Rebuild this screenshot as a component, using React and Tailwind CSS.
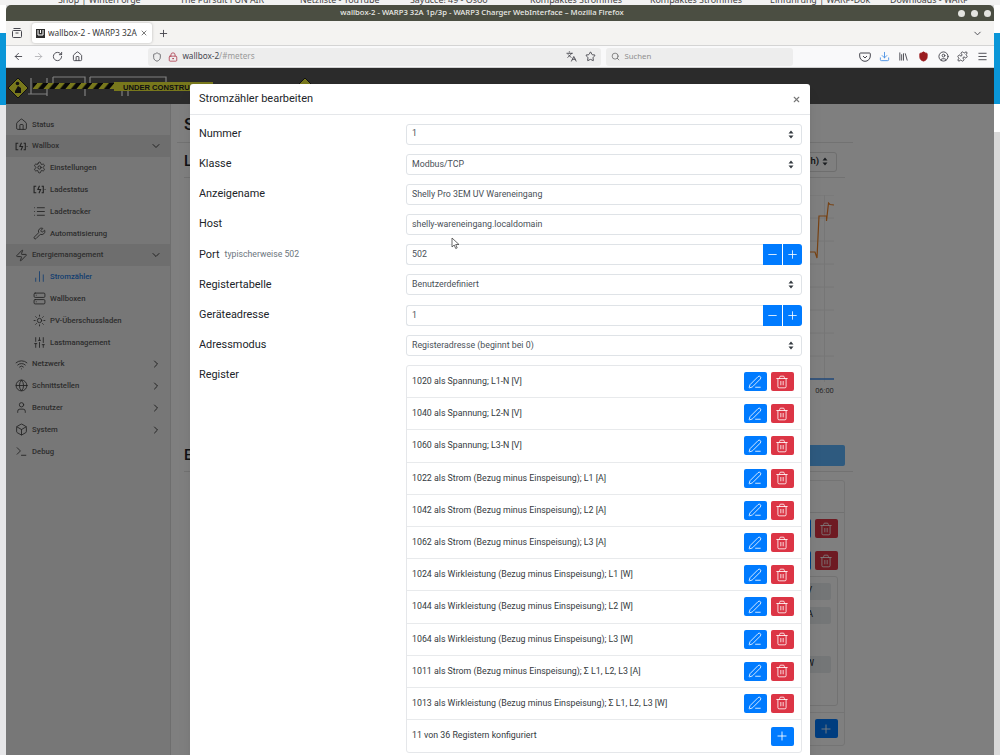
import React from "react";
import {
  ArrowLeft,
  ArrowRight,
  Box,
  ChartNoAxesColumn,
  ChevronDown,
  ChevronRight,
  CircleUser,
  Download,
  Globe,
  House,
  Languages,
  Library,
  List,
  LockKeyhole,
  Menu,
  Minus,
  PenLine,
  Plus,
  Puzzle,
  RotateCw,
  Search,
  Server,
  Settings,
  Shield,
  SlidersVertical,
  Star,
  Sun,
  Terminal,
  Trash2,
  User,
  Wifi,
  Wrench,
  X,
  Zap,
} from "lucide-react";

// [bolt] icon used for the wallbox entries
const ChargerIcon = ({ size = 14 }) => (
  <svg width={size} height={size} viewBox="0 0 24 24" fill="none" stroke="currentColor" strokeWidth="2">
    <path d="M6 6H2v12h4M16 6h3v12h-3" />
    <path d="M12 5l-3 7h5l-3 7" />
    <path d="M21.5 12h1.5" />
  </svg>
);

const PocketIcon = () => (
  <svg width="12" height="12" viewBox="0 0 12 12" fill="none" stroke="currentColor" strokeWidth="1">
    <path d="M1.5 2h9a.8.8 0 0 1 .8.8V5a5.3 5.3 0 0 1-10.6 0V2.8a.8.8 0 0 1 .8-.8z" />
    <path d="M4 5l2 2 2-2" />
  </svg>
);

const SelectArrows = () => (
  <svg width="6" height="9" viewBox="0 0 6 9" fill="#343a40">
    <path d="M3 0.5 5.5 3.5H0.5zM3 8.5 0.5 5.5H5.5z" />
  </svg>
);

const Logo = () => (
  <svg width="320" height="36" viewBox="0 0 320 36" className="shrink-0">
    <g fill="none" stroke="#ffffff" strokeWidth="1.2">
      <path d="M22 26h19M25 10v16M41 10v18M47 9h32v19M47 9v8M84 9h76v8M84 9v8M116 20v8M122 20v8" />
    </g>
    <path d="M12 10 22 20 12 30 2 20z" fill="#f0f038" stroke="#222" strokeWidth="1" />
    <path d="M9 23l3-5 3 2v5h-6z" fill="#222" />
    <circle cx="11.5" cy="15.5" r="1.8" fill="#222" />
    <defs>
      <pattern id="tape" width="11" height="6" patternUnits="userSpaceOnUse" patternTransform="skewX(-40)">
        <rect width="11" height="6" fill="#111" />
        <rect width="5.5" height="6" fill="#f0f038" />
      </pattern>
    </defs>
    <rect x="27" y="15" width="84" height="6" fill="url(#tape)" />
    <rect x="108" y="14" width="99" height="9" fill="#f0f038" />
    <text x="117" y="21.8" fontFamily="Liberation Sans, sans-serif" fontWeight="700" fontSize="7.6" fill="#222">
      UNDER CONSTRUCTION
    </text>
    <path d="M299 10 309 20 299 30 289 20z" fill="#f0f038" stroke="#222" />
    <path d="M297 18h4v6h-4z" fill="#222" />
  </svg>
);

const sideItems = [
  { label: "Status", icon: House },
  { label: "Wallbox", icon: ChargerIcon, chevron: "down", group: true },
  { label: "Einstellungen", icon: Settings, sub: true },
  { label: "Ladestatus", icon: ChargerIcon, sub: true },
  { label: "Ladetracker", icon: List, sub: true },
  { label: "Automatisierung", icon: Wrench, sub: true },
  { label: "Energiemanagement", icon: Zap, chevron: "down", group: true },
  { label: "Stromzähler", icon: ChartNoAxesColumn, sub: true, active: true },
  { label: "Wallboxen", icon: Server, sub: true },
  { label: "PV-Überschussladen", icon: Sun, sub: true },
  { label: "Lastmanagement", icon: SlidersVertical, sub: true },
  { label: "Netzwerk", icon: Wifi, chevron: "right" },
  { label: "Schnittstellen", icon: Globe, chevron: "right" },
  { label: "Benutzer", icon: User, chevron: "right" },
  { label: "System", icon: Box, chevron: "right" },
  { label: "Debug", icon: Terminal },
];

const registers = [
  "1020 als Spannung; L1-N [V]",
  "1040 als Spannung; L2-N [V]",
  "1060 als Spannung; L3-N [V]",
  "1022 als Strom (Bezug minus Einspeisung); L1 [A]",
  "1042 als Strom (Bezug minus Einspeisung); L2 [A]",
  "1062 als Strom (Bezug minus Einspeisung); L3 [A]",
  "1024 als Wirkleistung (Bezug minus Einspeisung); L1 [W]",
  "1044 als Wirkleistung (Bezug minus Einspeisung); L2 [W]",
  "1064 als Wirkleistung (Bezug minus Einspeisung); L3 [W]",
  "1011 als Strom (Bezug minus Einspeisung); Σ L1, L2, L3 [A]",
  "1013 als Wirkleistung (Bezug minus Einspeisung); Σ L1, L2, L3 [W]",
];

const SideRow = ({ item }) => {
  const Icon = item.icon;
  return (
    <div
      className={`flex h-[21.8px] items-center text-[7.7px] font-medium ${item.sub ? "pl-[26px]" : "pl-[8px]"} ${
        item.group ? "bg-[#dcdcdc]" : ""
      } ${item.active ? "text-[#2a7de0]" : "text-[#5c5c5c]"}`}
    >
      <span className={`flex w-[14px] justify-center ${item.active ? "" : "text-[#444]"}`}>
        <Icon size={13} strokeWidth={1.6} />
      </span>
      <span className="ml-[4px]">{item.label}</span>
      {item.chevron === "down" && <ChevronDown size={12} className="ml-auto mr-[8px] text-[#444]" />}
      {item.chevron === "right" && <ChevronRight size={12} className="ml-auto mr-[8px] text-[#444]" />}
    </div>
  );
};

const FormRow = ({ label, hint, children }) => (
  <div className="mb-[9.2px] flex min-h-[21px] items-start">
    <div className="flex h-[21px] w-[207px] shrink-0 items-center text-[10.9px] text-[#212529]">
      {label}
      {hint && <span className="ml-[5px] text-[8.7px] text-[#6c757d]">{hint}</span>}
    </div>
    <div className="min-w-0 flex-1">{children}</div>
  </div>
);

const Field = ({ value, select }) => (
  <div className="flex h-[21px] items-center justify-between rounded-[3px] border border-[#dfe3e7] bg-white pl-[5px] pr-[7px] text-[8.8px] text-[#495057]">
    <span>{value}</span>
    {select && <SelectArrows />}
  </div>
);

const NumberField = ({ value }) => (
  <div className="flex h-[21px]">
    <div className="flex flex-1 items-center rounded-l-[3px] border border-r-0 border-[#dfe3e7] pl-[5px] text-[8.8px] text-[#495057]">
      {value}
    </div>
    <button className="flex w-[19px] items-center justify-center bg-[#007bff] text-white">
      <Minus size={13} strokeWidth={1.5} />
    </button>
    <button className="ml-px flex w-[19px] items-center justify-center rounded-r-[3px] bg-[#007bff] text-white">
      <Plus size={13} strokeWidth={1.5} />
    </button>
  </div>
);

const ActionButton = ({ red, children }) => (
  <button
    className={`flex h-[19px] w-[23px] items-center justify-center rounded-[2px] text-white ${
      red ? "bg-[#dc3545]" : "bg-[#007bff]"
    }`}
  >
    {children}
  </button>
);

const Modal = () => (
  <div className="absolute left-[184px] top-[16px] w-[620px] rounded-t-[3px] bg-white shadow-lg">
    <div className="flex h-[31px] items-center justify-between border-b border-[#e5e7ea] pl-[9px] pr-[9px] pt-[1px]">
      <span className="text-[11px] text-[#212529]">Stromzähler bearbeiten</span>
      <X size={9} strokeWidth={3} className="text-[#777]" />
    </div>
    <div className="pl-[9px] pr-[8px] pt-[9px]">
      <FormRow label="Nummer">
        <Field value="1" select />
      </FormRow>
      <FormRow label="Klasse">
        <Field value="Modbus/TCP" select />
      </FormRow>
      <FormRow label="Anzeigename">
        <Field value="Shelly Pro 3EM UV Wareneingang" />
      </FormRow>
      <FormRow label="Host">
        <Field value="shelly-wareneingang.localdomain" />
      </FormRow>
      <FormRow label="Port" hint="typischerweise 502">
        <NumberField value="502" />
      </FormRow>
      <FormRow label="Registertabelle">
        <Field value="Benutzerdefiniert" select />
      </FormRow>
      <FormRow label="Geräteadresse">
        <NumberField value="1" />
      </FormRow>
      <FormRow label="Adressmodus">
        <Field value="Registeradresse (beginnt bei 0)" select />
      </FormRow>
      <FormRow label="Register">
        <div className="rounded-[3px] border border-[#e5e7ea]">
          {registers.map((reg) => (
            <div key={reg} className="flex h-[32.2px] items-center border-b border-[#e8eaec] pl-[5px] pr-[7.5px] text-[8.8px] text-[#343a40]">
              <span className="flex-1">{reg}</span>
              <ActionButton>
                <PenLine size={14} strokeWidth={1.4} />
              </ActionButton>
              <span className="w-[4px]" />
              <ActionButton red>
                <Trash2 size={14} strokeWidth={1.4} />
              </ActionButton>
            </div>
          ))}
          <div className="flex h-[32px] items-center justify-between pl-[5px] pr-[7.5px] text-[8.8px] text-[#343a40]">
            <span>11 von 36 Registern konfiguriert</span>
            <ActionButton>
              <Plus size={14} strokeWidth={1.5} />
            </ActionButton>
          </div>
        </div>
      </FormRow>
    </div>
    {/* mouse pointer */}
    <svg width="9" height="13" viewBox="0 0 9 13" className="absolute left-[261px] top-[153px]">
      <path d="M1 1v9l2.2-2 1.5 3.5 1.5-.6L4.7 7.5H8z" fill="#fff" stroke="#444" strokeWidth="0.8" />
    </svg>
  </div>
);

const Chart = () => (
  <svg width="661" height="200" viewBox="184 195 661 200" className="mt-[17px]">
    {[195, 218, 241, 264, 287, 310, 333, 356].map((y) => (
      <line key={y} x1="200" x2="834" y1={y} y2={y} stroke="#ececec" />
    ))}
    <line x1="824.5" x2="824.5" y1="195" y2="382" stroke="#ececec" />
    <line x1="200" x2="834" y1="379" y2="379" stroke="#3f8ff0" strokeWidth="1.5" />
    <path
      d="M200 252H815L817 258 819 216H826.5V221L828.5 203 830 204.5 834 205"
      fill="none"
      stroke="#ee8427"
      strokeWidth="1.2"
    />
    <text x="824.5" y="393" textAnchor="middle" fontSize="7.5" fontFamily="Roboto, sans-serif" fill="#555">
      06:00
    </text>
  </svg>
);

const MainContent = () => (
  <div className="w-[661px] pt-[9px] text-[#212529]">
    <div className="h-[22px] text-[17px] font-medium leading-[22px]">Stromzähler</div>
    <div className="-ml-[7px] mt-[7px] h-px w-[676px] bg-[#e5e5e5]" />
    <div className="mt-[9px] flex h-[20px] items-center justify-between pr-[8px]">
      <span className="text-[15px] font-medium">Leistungsverlauf</span>
      <div className="flex h-[20px] w-[120px] items-center justify-end gap-[3px] rounded-[3px] border border-[#dcdcdc] pr-[8px] text-[9.5px] font-medium">
        <span>letzte 48 h)</span>
        <SelectArrows />
      </div>
    </div>
    <div className="mt-[5px] h-px w-[661px] bg-[#e5e5e5]" />
    <Chart />
    <div className="mt-[50px] flex h-[21px] items-center justify-between">
      <span className="text-[15px] font-medium">Einstellungen</span>
      <div className="h-[21px] w-[300px] rounded-[2px] bg-[#5cb4ff]" />
    </div>
    <div className="mt-[5px] h-px w-[669px] bg-[#e5e5e5]" />
    <div className="ml-[20px] mt-[8px] h-[266px] rounded-[3px] border border-[#e8e8e8]">
      <div className="h-[32px] border-b border-[#e2e2e2]" />
      <div className="flex h-[32px] items-center justify-end gap-[4px] pr-[6.5px]">
        <ActionButton>
          <PenLine size={14} strokeWidth={1.4} />
        </ActionButton>
        <ActionButton red>
          <Trash2 size={14} strokeWidth={1.4} />
        </ActionButton>
      </div>
      <div className="flex h-[32px] items-center justify-end gap-[4px] pr-[6.5px]">
        <ActionButton>
          <PenLine size={14} strokeWidth={1.4} />
        </ActionButton>
        <ActionButton red>
          <Trash2 size={14} strokeWidth={1.4} />
        </ActionButton>
      </div>
      <div className="ml-auto mr-[6px] mt-[-1px] flex h-[130px] w-[300px] flex-col rounded-[3px] border border-[#e5e5e5] px-[6px] pt-[6px] text-[8.8px]">
        <div className="flex h-[17px] items-center justify-end rounded-[2px] bg-[#e9ecef] pr-[19px]">V</div>
        <div className="mt-[7px] flex h-[17px] items-center justify-end rounded-[2px] bg-[#e9ecef] pr-[18px]">A</div>
        <div className="mt-[32px] flex h-[17px] items-center justify-end rounded-[2px] bg-[#e9ecef] pr-[17px]">W</div>
      </div>
      <div className="mt-[6px] flex h-[33px] items-center justify-end border-t border-[#e8e8e8] pr-[6.5px]">
        <ActionButton>
          <Plus size={14} strokeWidth={1.5} />
        </ActionButton>
      </div>
    </div>
  </div>
);

const NavIcon = ({ children, className = "" }) => (
  <span className={`flex w-[19.6px] justify-center text-[#45454d] ${className}`}>{children}</span>
);

const BrowserChrome = () => (
  <>
    <div className="relative flex h-[16px] items-center justify-center rounded-t-[5px] bg-[#4b4e42] pr-[36px] text-[7.7px] font-medium text-[#ecece8]">
      wallbox-2 - WARP3 32A 1p/3p - WARP3 Charger WebInterface – Mozilla Firefox
      <div className="absolute right-[3px] flex gap-[6px]">
        <span className="h-[7px] w-[7px] rounded-full bg-[#e4e4e0]" />
        <span className="h-[7px] w-[7px] rounded-full bg-[#e4e4e0]" />
        <span className="h-[7px] w-[7px] rounded-full bg-[#e4e4e0]" />
      </div>
    </div>
    <div className="flex h-[24.5px] items-center border-b border-[#d4d4d4] bg-[#f4f3f1] pl-[5px] pr-[5px] pt-[1px]">
      <svg width="12" height="12" viewBox="0 0 12 12" fill="none" stroke="#45454d">
        <rect x="1.5" y="3.5" width="9" height="7" rx="1" />
        <path d="M2.5 1.5h7M4.5 6h3" />
      </svg>
      <div className="ml-[9px] flex h-[20px] w-[120px] items-center rounded-[3px] bg-white pl-[4px] text-[8.3px] text-[#3a3a3a] shadow-[0_0_3px_rgba(0,0,0,0.25)]">
        <svg width="9" height="9" viewBox="0 0 9 9" className="shrink-0">
          <rect width="9" height="9" fill="#2d2d2d" />
          <path d="M2 1v5h5V1" fill="none" stroke="#fff" />
          <path d="M4.5 1v3" stroke="#fff" />
        </svg>
        <span className="ml-[3px] w-[91px] overflow-hidden whitespace-nowrap">wallbox-2 - WARP3 32A 1p</span>
        <X size={8} className="ml-[1px] shrink-0" />
      </div>
      <Plus size={11} className="ml-[6px] text-[#45454d]" />
      <ChevronDown size={11} className="ml-auto mr-[6px] text-[#45454d]" />
    </div>
    <div className="flex h-[22px] items-center border-b border-[#cfcfcf] bg-[#f9f9fa] pl-[3px] pr-[2px] pt-[1px]">
      <NavIcon>
        <ArrowLeft size={11} />
      </NavIcon>
      <NavIcon className="!text-[#b5b5b8]">
        <ArrowRight size={11} />
      </NavIcon>
      <NavIcon>
        <RotateCw size={11} />
      </NavIcon>
      <NavIcon>
        <House size={11} />
      </NavIcon>
      <div className="ml-[61px] flex h-[18px] w-[453px] items-center rounded-[3px] bg-[#ededed] pl-[4px] text-[8.2px] text-[#9a9a9a]">
        <Shield size={10} className="text-[#5b5b60]" />
        <LockKeyhole size={10} className="ml-[6px] text-[#b04050]" />
        <span className="ml-[4px] text-[#45454d]">wallbox-2</span>
        <span>/#meters</span>
        <Languages size={11} className="ml-auto text-[#45454d]" />
        <Star size={11} className="ml-[8px] mr-[5px] text-[#45454d]" />
      </div>
      <div className="ml-[5px] flex h-[18px] w-[187px] items-center rounded-[3px] bg-[#ededed] pl-[5px] text-[7.8px] text-[#8f8f8f]">
        <Search size={9} className="text-[#666]" />
        <span className="ml-[4px]">Suchen</span>
      </div>
      <div className="ml-auto flex">
        <NavIcon>
          <PocketIcon />
        </NavIcon>
        <NavIcon className="!text-[#4a90e2]">
          <Download size={11} />
        </NavIcon>
        <NavIcon>
          <Library size={11} />
        </NavIcon>
        <NavIcon className="!text-[#9a1b1f]">
          <Shield size={11} fill="currentColor" />
        </NavIcon>
        <NavIcon>
          <CircleUser size={11} />
        </NavIcon>
        <NavIcon>
          <Puzzle size={11} />
        </NavIcon>
        <NavIcon>
          <Menu size={11} />
        </NavIcon>
      </div>
    </div>
  </>
);

export default function App() {
  return (
    <div className="flex h-[755px] w-[1000px] flex-col overflow-hidden bg-[#dcdcdc] font-['Roboto',sans-serif]">
      {/* sliver of the window behind */}
      <div className="flex h-[5px] shrink-0 items-end overflow-hidden whitespace-nowrap bg-[#f2f2f2] font-['Noto_Sans',sans-serif] text-[8.9px] leading-[10px] text-[#444]">
        <span className="ml-[58px] w-[122px]">Shop | WinterForge</span>
        <span className="w-[120px]">The Pursuit FUN AIR</span>
        <span className="w-[110px]">Netzliste - YouTube</span>
        <span className="w-[120px]">Sayucce! 49 - Osoo</span>
        <span className="w-[120px]">Kompaktes Strommes</span>
        <span className="w-[120px]">Kompaktes Strommes</span>
        <span className="w-[120px]">Einführung | WARP-Dok</span>
        <span>Downloads - WARP</span>
      </div>
      <div className="flex min-h-0 flex-1">
        <div className="flex w-[6px] shrink-0 flex-col">
          <div className="h-[28px] bg-white" />
          <div className="h-[72px] bg-[#0a96d8]" />
          <div className="flex-1 bg-[#e6e6e8]" />
        </div>
        <div className="flex w-[988px] shrink-0 flex-col font-['Noto_Sans',sans-serif]">
          <BrowserChrome />
          <div className="relative flex min-h-0 flex-1 flex-col overflow-hidden bg-white font-['Roboto',sans-serif]">
            <div className="flex h-[36px] shrink-0 items-center bg-[#565656]">
              <Logo />
            </div>
            <div className="flex min-h-0 flex-1">
              <div className="w-[165px] shrink-0 border-r border-[#dcdcdc] bg-[#eeeeee] pt-[10px]">
                {sideItems.map((item) => (
                  <SideRow key={item.label} item={item} />
                ))}
              </div>
              <div className="min-w-0 flex-1 pl-[13px]">
                <MainContent />
              </div>
            </div>
            <div className="absolute inset-0 bg-black/50" />
            <Modal />
          </div>
        </div>
        <div className="flex w-[6px] shrink-0 flex-col">
          <div className="h-[28px] bg-white" />
          <div className="h-[71px] bg-[#0a96d8]" />
          <div className="h-[28px] bg-white" />
          <div className="flex-1 bg-[#d9d9d9]" />
        </div>
      </div>
    </div>
  );
}
